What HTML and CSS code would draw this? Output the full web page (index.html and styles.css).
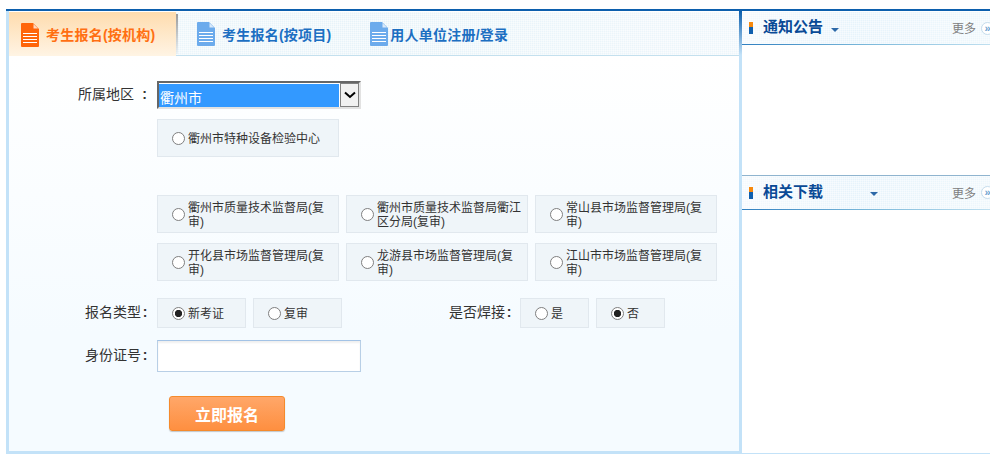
FILE: index.html
```html
<!DOCTYPE html>
<html lang="zh-CN">
<head>
<meta charset="utf-8">
<title>考生报名</title>
<link rel="stylesheet" href="styles.css">
</head>
<body>
<svg class="defs" width="0" height="0" aria-hidden="true">
  <symbol id="doc" viewBox="0 0 18 24">
    <path fill="currentColor" d="M1 0H12L18 6V23a1 1 0 0 1-1 1H1a1 1 0 0 1-1-1V1a1 1 0 0 1 1-1Z"/>
    <path fill="#fff" opacity=".75" d="M12.5 1 17 5.5H12.5Z"/>
    <path fill="#fff" d="M2 10H16V11H2ZM2 13H16V14H2ZM2 16H16V17H2ZM2 19H16V20H2Z"/>
  </symbol>
</svg>
<div class="page">
  <main class="main">
    <nav class="tabs">
      <a class="tab tab-active"><svg class="doc"><use href="#doc"/></svg><span>考生报名(按机构)</span></a>
      <a class="tab tab-second"><svg class="doc"><use href="#doc"/></svg><span>考生报名(按项目)</span></a>
      <a class="tab tab-third"><svg class="doc"><use href="#doc"/></svg><span>用人单位注册/登录</span></a>
    </nav>
    <form class="form">
      <div class="row row-region">
        <label class="label">所属地区<span class="colon colon-wide">:</span></label>
        <div class="select-wrap">
          <select class="select"><option>衢州市</option></select>
          <span class="select-btn"><svg width="12" height="8" viewBox="0 0 12 8"><path d="M1 1.5 6 6l5-4.5" fill="none" stroke="#000" stroke-width="2"/></svg></span>
        </div>
      </div>
      <div class="org-single">
        <label class="opt opt-org"><input type="radio" name="org"><span>衢州市特种设备检验中心</span></label>
      </div>
      <div class="org-grid">
        <label class="opt opt-org"><input type="radio" name="org"><span>衢州市质量技术监督局(复审)</span></label>
        <label class="opt opt-org"><input type="radio" name="org"><span>衢州市质量技术监督局衢江区分局(复审)</span></label>
        <label class="opt opt-org"><input type="radio" name="org"><span>常山县市场监督管理局(复审)</span></label>
        <label class="opt opt-org"><input type="radio" name="org"><span>开化县市场监督管理局(复审)</span></label>
        <label class="opt opt-org"><input type="radio" name="org"><span>龙游县市场监督管理局(复审)</span></label>
        <label class="opt opt-org"><input type="radio" name="org"><span>江山市市场监督管理局(复审)</span></label>
      </div>
      <div class="row row-type">
        <span class="label">报名类型<span class="colon">:</span></span>
        <label class="opt opt-wide"><input type="radio" name="kind" checked><span>新考证</span></label>
        <label class="opt opt-wide"><input type="radio" name="kind"><span>复审</span></label>
        <span class="label label-weld">是否焊接<span class="colon">:</span></span>
        <label class="opt opt-narrow"><input type="radio" name="weld"><span>是</span></label>
        <label class="opt opt-narrow"><input type="radio" name="weld" checked><span>否</span></label>
      </div>
      <div class="row row-id">
        <label class="label">身份证号<span class="colon">:</span></label>
        <input class="id-input" type="text">
      </div>
      <button class="submit" type="button">立即报名</button>
    </form>
  </main>
  <aside class="side">
    <section class="panel panel-notice">
      <header class="panel-head">
        <i class="bullet"></i><h2>通知公告</h2><i class="caret caret-notice"></i>
        <a class="more">更多</a><i class="more-icon">»</i>
      </header>
    </section>
    <section class="panel panel-down">
      <header class="panel-head panel-head-down">
        <i class="bullet"></i><h2>相关下载</h2><i class="caret caret-down"></i>
        <a class="more">更多</a><i class="more-icon">»</i>
      </header>
    </section>
  </aside>
</div>
</body>
</html>
```
FILE: styles.css
```css
* { box-sizing: border-box; }
html, body { margin: 0; padding: 0; height: 459px; overflow: hidden; background: #fff; }
body { font-family: "Liberation Sans", "Noto Sans CJK SC", sans-serif; font-size: 12px; color: #333; }
.defs { position: absolute; }

.page {
  display: flex;
  width: 984px;
  height: 445px;
  margin: 9px 0 0 6px;
  border-top: 2px solid #0c5fad;
}

/* main column */
.main {
  position: relative;
  width: 736px;
  height: 443px;
  padding: 1px 3px 3px;
  background:
    linear-gradient(#0c5fad, #c3e2f8) right top / 3px 44px no-repeat,
    linear-gradient(#c3e2f8, #c3e2f8) right top / 3px 100% no-repeat,
    linear-gradient(#c3e2f8, #c3e2f8) left top / 3px 100% no-repeat,
    linear-gradient(#c3e2f8, #c3e2f8) left bottom / 100% 3px no-repeat;
}
.tabs {
  display: flex;
  height: 44px;
  border-bottom: 1px solid #c4e0ee;
  background:
    repeating-linear-gradient(90deg, rgba(255,255,255,.45) 0 1px, transparent 1px 2px),
    repeating-linear-gradient(0deg, rgba(255,255,255,.45) 0 1px, transparent 1px 2px),
    linear-gradient(90deg, #eef6fb, #e6f3f9 50%, #edf6fb);
}
.tab {
  display: flex;
  align-items: center;
  height: 43px;
  font-size: 14px;
  font-weight: bold;
  letter-spacing: .22px;
  color: #1c6fc2;
}
.doc { width: 18px; height: 24px; flex: none; color: #6cabec; margin-top: 1px; }
.tab-active {
  position: relative;
  width: 167px;
  height: 44px;
  padding-left: 12px;
  color: #ff6f12;
  background: linear-gradient(#fedcae, #fff4e4);
}
.tab-active::after {
  content: "";
  position: absolute;
  top: 2px;
  right: -2px;
  width: 2px;
  height: 40px;
  background: linear-gradient(#9a9a9a, rgba(200,215,225,.2));
}
.tab-active .doc { color: #ff6509; }
.tab-active span { margin-left: 7px; }
.tab-second { margin-left: 21px; }
.tab-second span { margin-left: 7px; }
.tab-third { margin-left: 39px; }
.tab-third span { margin-left: 2px; }

.form {
  height: 395px;
  padding-top: 25px;
  background: linear-gradient(#fff, #f5fbff 70%);
}
.row { display: flex; align-items: center; }
.label {
  width: 148px;
  padding: 0 8px 4px 0;
  flex: none;
  font-size: 14px;
  text-align: right;
  color: #333;
}
.colon { display: inline-block; width: 8px; text-align: center; font-weight: bold; }
.colon-wide { width: 15px; padding-right: 2px; text-align: right; }

.row-region { height: 28px; }
.select-wrap {
  display: flex;
  width: 204px;
  height: 28px;
  border-style: solid;
  border-width: 2px;
  border-color: #666 #e2e2e2 #e2e2e2 #666;
  background: #fff;
}
.select {
  width: 180px;
  flex: none;
  height: 23px;
  margin: 1px 1px 0 0;
  padding: 5px 0 0 1px;
  border: 0;
  border-radius: 0;
  appearance: none;
  font: 14px "Liberation Sans", "Noto Sans CJK SC", sans-serif;
  color: #fff;
  background: #3399ff;
}
.select-btn {
  display: flex;
  align-items: center;
  justify-content: center;
  width: 19px;
  height: 24px;
  border: 1px solid #808080;
  background: #f1f1f1;
}

.opt {
  display: flex;
  align-items: center;
  flex: none;
  padding-left: 14px;
  border: 1px solid #e1e8ee;
  background: #eff5f9;
  line-height: 14px;
  color: #333;
}
.opt input {
  appearance: none;
  flex: none;
  width: 13px;
  height: 13px;
  margin: 0 3px 0 0;
  border: 1px solid #7f7f7f;
  border-radius: 50%;
  background: #fff;
}
.opt input:checked { background: radial-gradient(circle, #222 0 3.4px, #fff 3.9px); }
.opt span { display: block; padding-top: 2px; }
.opt-org { width: 182px; height: 38px; }
.opt-org span { width: 146px; }
.org-single { margin: 10px 0 0 148px; }
.org-grid {
  display: grid;
  grid-template-columns: repeat(3, 182px);
  gap: 10px 7px;
  margin: 38px 0 0 148px;
}
.row-type { height: 30px; margin-top: 17px; }
.opt-wide { width: 89px; height: 30px; margin-right: 7px; }
.opt-narrow { width: 69px; height: 30px; margin-right: 7px; }
.label-weld { width: 171px; padding-right: 7px; }
.row-id { height: 32px; margin-top: 12px; }
.id-input {
  width: 204px;
  height: 32px;
  border: 1px solid #b8cfe6;
  border-top-color: #a3c3e6;
  background: #fff;
  box-shadow: inset 0 2px 2px #f0f0f0;
  outline: 0;
}
.submit {
  display: block;
  width: 116px;
  height: 35px;
  margin: 24px 0 0 160px;
  padding: 0;
  border: 1px solid #f58a2c;
  border-radius: 3px;
  background: linear-gradient(#ffa769, #fe8f40);
  box-shadow: 0 1px 1px rgba(120,120,120,.4);
  font: bold 16px "Liberation Sans", "Noto Sans CJK SC", sans-serif;
  color: #fff;
}

/* side column */
.side { width: 248px; height: 443px; border-bottom: 1px solid #c3e2f8; padding-top: 1px; }
.panel { overflow: hidden; }
.panel-notice { height: 163px; }
.panel-down { border-top: 1px solid #8fb4cf; }
.panel-head {
  display: flex;
  align-items: center;
  height: 33px;
  padding-left: 7px;
  border-bottom: 1px solid;
  border-image: linear-gradient(90deg, #2f7fc0, #7ab8da 50%, #c0e0f0) 1;
  background:
    repeating-linear-gradient(90deg, rgba(255,255,255,.4) 0 1px, transparent 1px 2px),
    repeating-linear-gradient(0deg, rgba(255,255,255,.4) 0 1px, transparent 1px 2px),
    linear-gradient(90deg, #f4f9fd, #e6f3fb 45%, #eef7fc);
}
.panel-head-down { height: 34px; }
.bullet {
  flex: none;
  width: 4px;
  height: 12px;
  margin-right: 10px;
  background: linear-gradient(#f7890c 0 5px, #0f5fae 5px);
}
.panel-head h2 {
  margin: 0 0 2px;
  width: 60px;
  flex: none;
  font-size: 15px;
  line-height: 20px;
  font-weight: bold;
  color: #0a4a96;
  white-space: nowrap;
}
.caret {
  flex: none;
  width: 0;
  height: 0;
  margin-top: 3px;
  border: 4px solid transparent;
  border-top: 4px solid #2c68a8;
  border-bottom: 0;
}
.caret-notice { margin-left: 8px; margin-right: 113px; }
.caret-down { margin-left: 47px; margin-right: 74px; }
.more { flex: none; width: 24px; margin-top: 2px; font-size: 12px; line-height: 14px; color: #808080; white-space: nowrap; }
.more-icon {
  flex: none;
  width: 13px;
  height: 13px;
  margin-left: 5px;
  border: 1px solid #c5dcec;
  border-radius: 50%;
  background: #fff;
  font: bold 11px/10px "Liberation Sans", sans-serif;
  color: #6fa3d0;
  text-align: center;
}
```
